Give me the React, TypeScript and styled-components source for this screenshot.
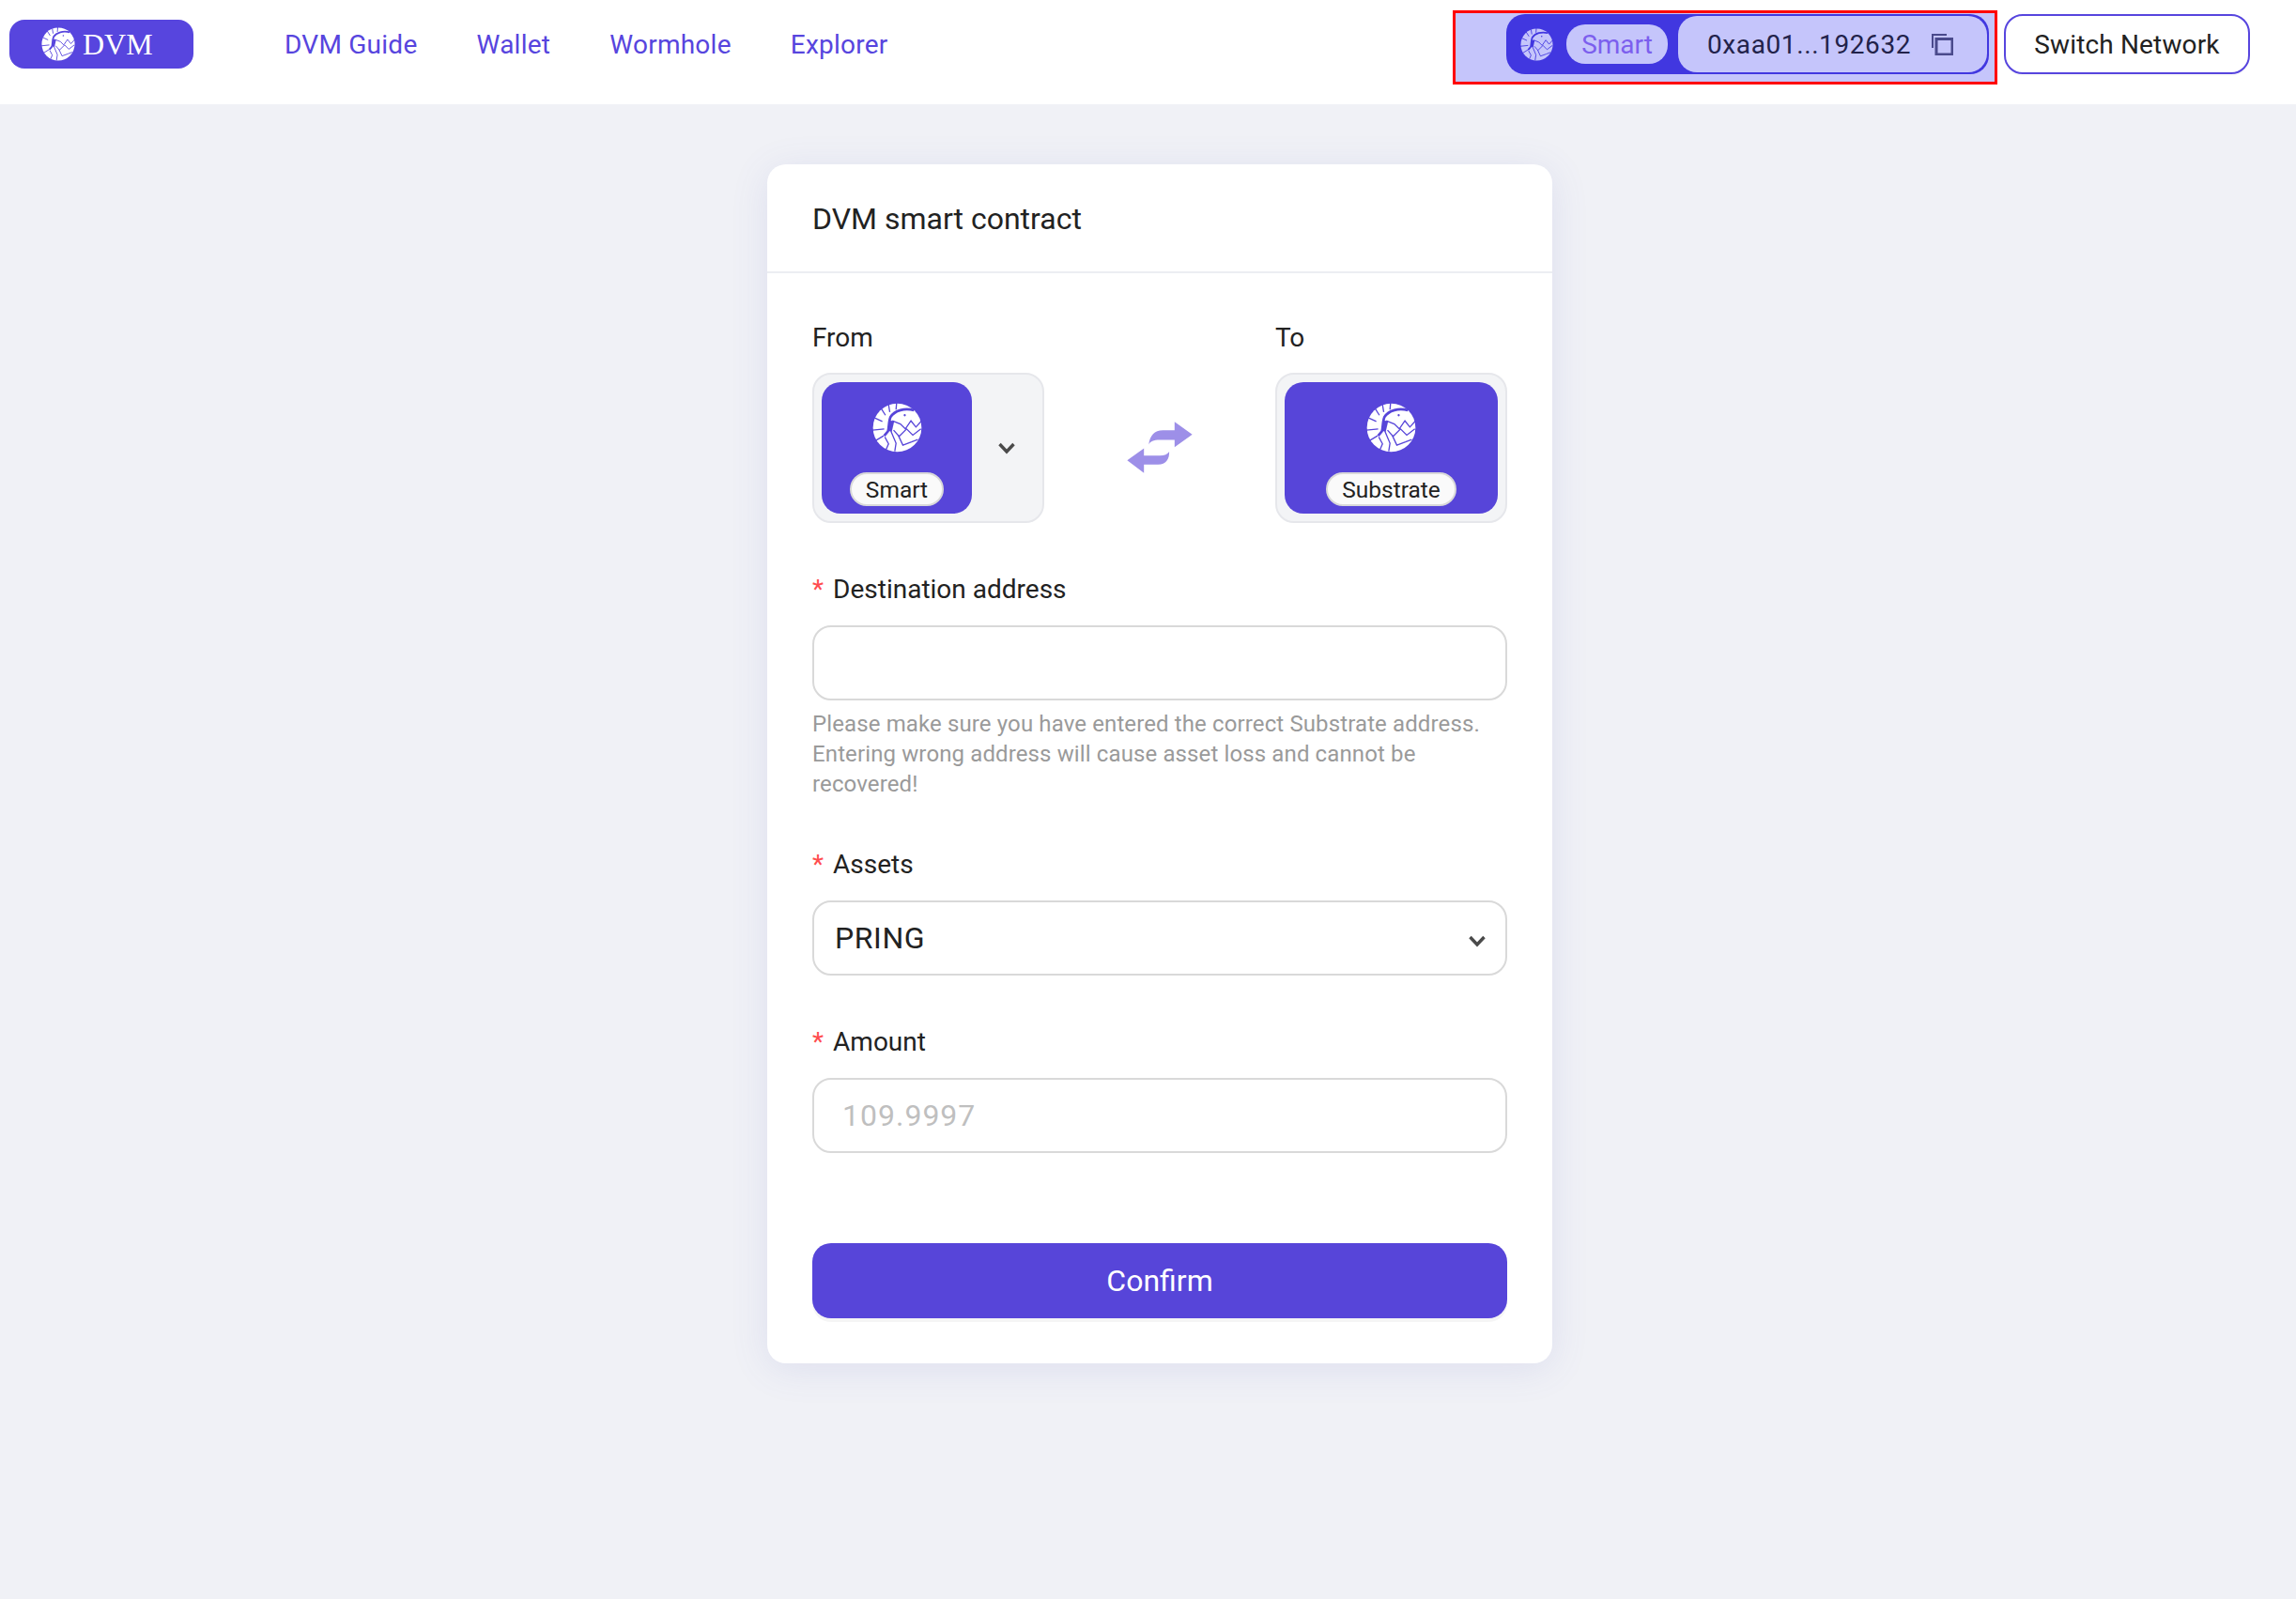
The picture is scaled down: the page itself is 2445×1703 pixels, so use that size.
import { createGlobalStyle } from "styled-components";
import styled from "styled-components";

const GlobalStyle = createGlobalStyle`
html, body {
  margin: 0;
  padding: 0;
  background: #f0f1f6;
  font-family: Roboto, "Noto Sans", sans-serif;
  color: #222;
}
* {
  box-sizing: border-box;
}
`;

const Page = styled.div`
  min-height: 1703px;
  background: #f0f1f6;
`;

const Header = styled.header`
  display: flex;
  align-items: center;
  height: 111px;
  padding: 0 49px 17px 10px;
  background: #fff;
`;

const Brand = styled.div`
  display: flex;
  align-items: center;
  gap: 8px;
  width: 196px;
  height: 52px;
  padding-left: 34px;
  border-radius: 16px;
  background: #5745de;
  color: #fff;
  font-family: "Liberation Serif", serif;
  font-size: 32px;
`;

const Nav = styled.nav`
  display: flex;
  gap: 63px;
  margin-left: 97px;
`;

const NavLink = styled.a`
  color: #5745de;
  font-size: 28px;
  letter-spacing: 0.25px;
`;

const Actions = styled.div`
  display: flex;
  align-items: center;
  gap: 7px;
  margin-left: auto;
`;

const Highlight = styled.div`
  display: flex;
  justify-content: flex-end;
  align-items: center;
  width: 580px;
  height: 79px;
  margin-top: 7px;
  padding-right: 6px;
  border: 3px solid #ff0000;
  background: #c5c5fb;
`;

const Account = styled.div`
  display: flex;
  align-items: center;
  width: 514px;
  height: 64px;
  margin-top: -7px;
  padding: 0 2px 0 15px;
  border-radius: 20px;
  background: #4137e0;
`;

const NetworkTag = styled.span`
  display: flex;
  align-items: center;
  justify-content: center;
  width: 108px;
  height: 42px;
  margin-left: 14px;
  border-radius: 20px;
  background: #c5c5fb;
  color: #7c5fee;
  font-size: 28px;
`;

const Address = styled.div`
  display: flex;
  align-items: center;
  justify-content: space-between;
  width: 329px;
  height: 60px;
  margin-left: auto;
  padding: 0 36px 0 31px;
  border-radius: 20px;
  background: #c5c5fb;
  color: #22224a;
  font-size: 28px;
  letter-spacing: 0.6px;
`;

const SwitchButton = styled.button`
  width: 262px;
  height: 64px;
  border: 2px solid #5745de;
  border-radius: 20px;
  background: #fff;
  box-shadow: 0 2px 0 rgba(0, 0, 0, 0.02);
  color: #222;
  font-family: inherit;
  font-size: 28px;
  letter-spacing: 0.15px;
`;

const Main = styled.main`
  display: flex;
  justify-content: center;
  padding: 64px 0 0 25px;
`;

const Card = styled.section`
  width: 836px;
  border-radius: 20px;
  background: #fff;
  box-shadow: 0 6px 40px rgba(87, 100, 190, 0.12);
`;

const CardTitle = styled.h2`
  display: flex;
  align-items: center;
  height: 116px;
  margin: 0;
  padding: 2px 48px 0;
  border-bottom: 2px solid #eceef2;
  color: #222;
  font-size: 32px;
  font-weight: 400;
`;

const CardBody = styled.div`
  padding: 52px 48px 48px;
`;

const SwapRow = styled.div`
  display: flex;
  justify-content: space-between;
  align-items: flex-end;
`;

const Label = styled.label`
  display: block;
  height: 32px;
  margin-bottom: 22px;
  color: #222;
  font-size: 28px;
  line-height: 34px;
`;

const FieldLabel = styled(Label)`
  margin-bottom: 23px;
`;

const Required = styled.span`
  margin-right: 10px;
  color: #ff4d4f;
  font-size: 28px;
`;

const ChainBox = styled.div`
  display: flex;
  align-items: center;
  width: 247px;
  height: 160px;
  padding: 8px;
  border: 2px solid #e6e7eb;
  border-radius: 20px;
  background: #f3f4f6;
`;

const ChainTile = styled.div<{ $wide?: boolean }>`
  display: flex;
  flex-direction: column;
  align-items: center;
  width: ${(props) => (props.$wide ? "100%" : "160px")};
  height: 140px;
  padding: 22px 0 8px;
  border-radius: 20px;
  background: #5745d9;
`;

const ChainTag = styled.span`
  display: flex;
  align-items: center;
  height: 36px;
  margin-top: auto;
  padding: 0 15px;
  border: 2px solid #d9d9d9;
  border-radius: 18px;
  background: #fafafa;
  color: #222;
  font-size: 24.5px;
`;

const ChainCaret = styled.div`
  display: flex;
  flex: 1;
  justify-content: center;
  padding-left: 6px;
  color: #4a4a4a;
`;

const SwapIcon = styled.div`
  display: flex;
  margin-bottom: 51px;
`;

const Field = styled.div`
  margin-top: 54px;
`;

const Control = styled.input`
  display: block;
  width: 100%;
  height: 80px;
  padding: 0 30px;
  border: 2px solid #d9d9d9;
  border-radius: 20px;
  background: #fff;
  font-family: inherit;
  font-size: 32px;
  letter-spacing: 1px;
  outline: none;
  &::placeholder {
    color: #bfbfbf;
  }
`;

const SelectBox = styled.div`
  display: flex;
  align-items: center;
  justify-content: space-between;
  height: 80px;
  padding: 0 20px 0 22px;
  border: 2px solid #d9d9d9;
  border-radius: 20px;
  color: #222;
  font-size: 32px;
  letter-spacing: 0.6px;
  svg {
    margin-top: 6px;
  }
`;

const Help = styled.p`
  margin: 9px 0 -1px;
  color: #9a9a9a;
  font-size: 24px;
  letter-spacing: 0.12px;
  line-height: 32px;
`;

const Confirm = styled.button`
  display: block;
  width: 100%;
  height: 80px;
  margin-top: 96px;
  border: none;
  border-radius: 20px;
  background: #5745d9;
  box-shadow: 0 4px 0 rgba(0, 0, 0, 0.04);
  color: #fff;
  font-family: inherit;
  font-size: 32px;
`;

function DragonLogo({ size, disc, cut }: { size: number; disc: string; cut: string }) {
  return (
    <svg width={size} height={size} viewBox="0 0 160 160" style={{ flexShrink: 0 }}>
      <circle cx="80" cy="80" r="78" fill={disc} />
      <path d="M134 24 C104 16 72 24 58 46 C52 60 54 78 50 92 L38 106" fill="none" stroke={cut} strokeWidth="8" />
      <path d="M56 56 L70 60 L62 94 L52 90 Z" fill={cut} />
      <path d="M64 58 L90 68 L106 84 L124 58 L140 78 L158 58" fill="none" stroke={cut} strokeWidth="4" />
      <path d="M68 88 L86 108 L110 84 L130 104 L156 84" fill="none" stroke={cut} strokeWidth="4" />
      <path d="M60 92 L76 130 L72 156" fill="none" stroke={cut} strokeWidth="4" />
      <path d="M84 106 L98 136 L126 126 L146 118" fill="none" stroke={cut} strokeWidth="4" />
      <path d="M40 110 L52 132 L44 150" fill="none" stroke={cut} strokeWidth="4" />
      <path d="M78 0 L76 22 M52 6 L56 30 M28 18 L42 40 M6 48 L32 60 M0 88 L38 84 M10 122 L36 106" fill="none" stroke={cut} strokeWidth="4" />
      <circle cx="104" cy="40" r="3.5" fill={cut} />
    </svg>
  );
}

function Chevron({ size }: { size: number }) {
  return (
    <svg width={size} height={size} viewBox="0 0 20 20">
      <path d="M2.5 6 L10 14 L17.5 6" fill="none" stroke="#4a4a4a" strokeWidth="3.4" />
    </svg>
  );
}

function CopyIcon() {
  return (
    <svg width="24" height="24" viewBox="0 0 24 24">
      <path d="M2 16 V2 H17" fill="none" stroke="#4a4a8c" strokeWidth="2" />
      <rect x="6" y="6.5" width="17" height="16.5" fill="none" stroke="#4a4a8c" strokeWidth="3" />
    </svg>
  );
}

function SwapArrows() {
  return (
    <svg width="74" height="60" viewBox="25 20 220 175">
      <path
        d="M182 28 L238 68 L182 108 V85 H135 C115 85 105 90 100 100 C104 72 118 55 145 55 H182 Z"
        fill="#9d8fe8"
      />
      <path
        d="M85 112 L32 150 L85 190 V163 H130 C155 163 166 145 165 122 C160 130 150 135 135 135 H85 Z"
        fill="#9d8fe8"
      />
    </svg>
  );
}

export default function App() {
  return (
    <Page>
      <GlobalStyle />
      <Header>
        <Brand>
          <DragonLogo size={36} disc="#ffffff" cut="#5745de" />
          DVM
        </Brand>
        <Nav>
          <NavLink>DVM Guide</NavLink>
          <NavLink>Wallet</NavLink>
          <NavLink>Wormhole</NavLink>
          <NavLink>Explorer</NavLink>
        </Nav>
        <Actions>
          <Highlight>
            <Account>
              <DragonLogo size={35} disc="#c5c5fb" cut="#4137e0" />
              <NetworkTag>Smart</NetworkTag>
              <Address>
                0xaa01...192632
                <CopyIcon />
              </Address>
            </Account>
          </Highlight>
          <SwitchButton>Switch Network</SwitchButton>
        </Actions>
      </Header>
      <Main>
        <Card>
          <CardTitle>DVM smart contract</CardTitle>
          <CardBody>
            <SwapRow>
              <div>
                <Label>From</Label>
                <ChainBox>
                  <ChainTile>
                    <DragonLogo size={53} disc="#ffffff" cut="#5745d9" />
                    <ChainTag>Smart</ChainTag>
                  </ChainTile>
                  <ChainCaret>
                    <Chevron size={20} />
                  </ChainCaret>
                </ChainBox>
              </div>
              <SwapIcon>
                <SwapArrows />
              </SwapIcon>
              <div>
                <Label>To</Label>
                <ChainBox>
                  <ChainTile $wide>
                    <DragonLogo size={53} disc="#ffffff" cut="#5745d9" />
                    <ChainTag>Substrate</ChainTag>
                  </ChainTile>
                </ChainBox>
              </div>
            </SwapRow>
            <Field>
              <FieldLabel>
                <Required>*</Required>Destination address
              </FieldLabel>
              <Control />
              <Help>
                Please make sure you have entered the correct Substrate address. Entering wrong address will cause asset
                loss and cannot be recovered!
              </Help>
            </Field>
            <Field>
              <FieldLabel>
                <Required>*</Required>Assets
              </FieldLabel>
              <SelectBox>
                PRING
                <Chevron size={20} />
              </SelectBox>
            </Field>
            <Field>
              <FieldLabel>
                <Required>*</Required>Amount
              </FieldLabel>
              <Control placeholder="109.9997" />
            </Field>
            <Confirm>Confirm</Confirm>
          </CardBody>
        </Card>
      </Main>
    </Page>
  );
}
